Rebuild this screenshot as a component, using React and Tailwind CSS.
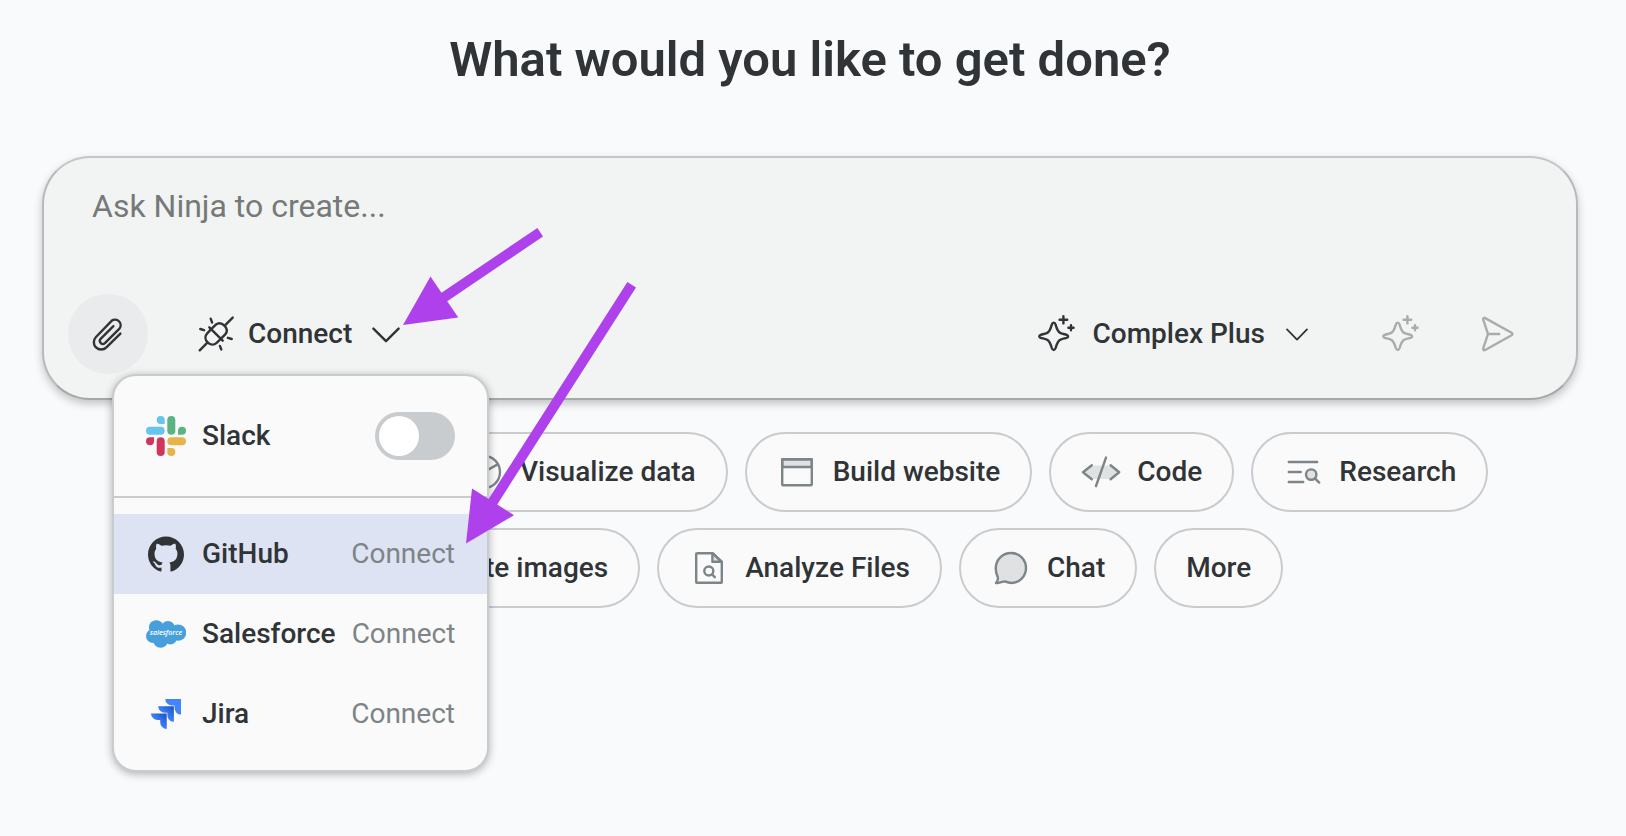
import { useState } from "react";
import { SiGithub } from "react-icons/si";

function Icon({ children, className = "" }) {
  return (
    <svg
      viewBox="0 0 40 40"
      className={`size-10 shrink-0 ${className}`}
      fill="none"
      stroke="currentColor"
      strokeWidth="2.4"
      strokeLinecap="round"
      strokeLinejoin="round"
      aria-hidden="true"
    >
      {children}
    </svg>
  );
}

const PaperclipIcon = () => (
  <Icon>
    <path d="M32.4 19.6L18.4 33.4A7.3 7.3 0 0 1 8 23L23.6 6.8A5.6 5.6 0 0 1 31.5 14.6L16.9 29.2A3.05 3.05 0 0 1 12.6 24.9L25.4 12.2" />
  </Icon>
);

const PlugIcon = () => (
  <Icon>
    <path d="M3.7 36.3L11.4 28.6M29 11.4L36.7 3.6M13.3 13.3L26.7 26.7" />
    <path d="M15.2 15.2L19.6 10.8C22.3 8.6 25.6 8.7 28.4 11.6C31.3 14.5 31.4 17.8 29.2 20.4L24.8 24.8" />
    <path d="M15.2 15.2L11.2 19.4C8.8 22 8.8 25.6 11.6 28.4C14.4 31.2 18 31.2 20.6 28.8L24.8 24.8" />
    <path d="M14.7 4.7L16.1 8.5M4.3 15L8.1 16.2M31.9 23.8L35.7 25M23.9 31.9L25.3 35.5" />
  </Icon>
);

const SparkleIcon = () => (
  <Icon>
    <path d="M16.7 8.6C15.5 8.6 15.1 9.6 14.8 10.6C13.6 15 12.6 18 9.8 19.1C7.8 19.9 5.6 20.3 3.7 20.9C1.8 21.5 1.8 23.3 3.7 23.8C5.6 24.4 7.8 24.8 9.8 25.6C12.6 26.7 13.6 29.6 14.8 34C15.1 35 15.5 36 16.7 36C17.9 36 18.3 35 18.6 34C19.8 29.6 20.8 26.7 23.6 25.6C25.6 24.8 27.8 24.4 29.7 23.8C31.6 23.3 31.6 21.5 29.7 20.9C27.8 20.3 25.6 19.9 23.6 19.1C20.8 18 19.8 15 18.6 10.6C18.3 9.6 17.9 8.6 16.7 8.6Z" />
    <path d="M26.4 2.2V9.4M22.6 5.8H30.2M34 11.2V16.2M31.4 13.7H36.6" />
  </Icon>
);

const SendIcon = () => (
  <Icon>
    <path d="M6.2 5.6C5.8 4.3 7 3.4 8.2 4.1L34.6 18.7C35.7 19.4 35.7 20.6 34.6 21.3L8.2 36C7 36.7 5.8 35.8 6.2 34.4L10.7 20.9C10.9 20.3 10.9 19.7 10.7 19.1ZM11 20H22.2" />
  </Icon>
);

const ChevronIcon = ({ size = "large" }) => (
  <svg
    viewBox="0 0 32 32"
    className="size-8 shrink-0"
    fill="none"
    stroke="currentColor"
    strokeWidth={size === "large" ? 2.4 : 1.8}
    strokeLinecap="round"
    strokeLinejoin="round"
    aria-hidden="true"
  >
    <path d={size === "large" ? "M3.4 10.6L16 23.2L28.6 10.6" : "M6 11.4L16 21.6L26 11.4"} />
  </svg>
);

const PieIcon = () => (
  <Icon>
    <circle cx="20" cy="20" r="16" />
    <path d="M20 4V20L33.2 12.6" />
  </Icon>
);

const WindowIcon = () => (
  <Icon>
    <path d="M5.2 7.2H34.8V15H5.2Z" fill="#dfe1e3" />
    <rect x="5.2" y="7.2" width="29.6" height="26" rx="0.6" />
  </Icon>
);

const CodeIcon = () => (
  <Icon>
    <path d="M11.2 13.4H29L38 20.2L29 27H11.2L2 20.2Z" fill="#dfe1e3" stroke="none" />
    <path d="M10.8 13.2L2 20.3L10.8 27.2M29.6 13.2L38.2 20.3L29.6 27.2M25 5.6L15 34" />
  </Icon>
);

const ResearchIcon = () => (
  <Icon>
    <path d="M5.8 10H34.2M5.8 20H17.8M5.8 30H20.2" />
    <circle cx="28.2" cy="22.6" r="5.2" fill="#dfe1e3" />
    <path d="M32 26.4L36.2 30.6" />
  </Icon>
);

const ImageIcon = () => (
  <Icon>
    <rect x="5" y="6" width="30" height="28" rx="1" />
    <path d="M5 29L15 19L24 28L29 23L35 29" />
  </Icon>
);

const FileSearchIcon = () => (
  <Icon>
    <path d="M23.4 5.2V13.8H32.8Z" fill="#dfe1e3" />
    <path d="M8.6 5.2H23.6L32.8 13.8V33.4C32.8 34.2 32.4 34.8 31.6 34.8H8.6C7.8 34.8 7.2 34.2 7.2 33.4V6.4C7.2 5.6 7.8 5.2 8.6 5.2Z" />
    <circle cx="19.8" cy="23" r="4.5" />
    <path d="M23 26.4L25.8 29.2" />
  </Icon>
);

const ChatIcon = () => (
  <Icon>
    <path
      d="M5 35C7.2 32.6 7.4 30.6 6.4 28C5.2 25.4 4.6 22.6 4.8 19.4C5.2 11 12 5 20 5C28.4 5 35 11.4 35 20C35 28.4 28.4 35 20.4 35C17.6 35 15.8 34.2 14 33.4C11.4 33.2 8.6 35.4 5 35Z"
      fill="#dfe1e3"
    />
  </Icon>
);

const SlackLogo = () => (
  <svg viewBox="0 0 40 40" className="size-10" aria-hidden="true">
    <g fill="#67c3ef">
      <path d="M14.7 0A4 4 0 0 1 18.7 4V8H14.7A4 4 0 0 1 14.7 0Z" />
      <rect y="10.7" width="18.7" height="8" rx="4" />
    </g>
    <g fill="#5ab481">
      <rect x="21.3" width="8" height="18.7" rx="4" />
      <path d="M32 18.7V14.7A4 4 0 1 1 36 18.7Z" />
    </g>
    <g fill="#d0355c">
      <path d="M8 21.3V25.3A4 4 0 1 1 4 21.3Z" />
      <rect x="10.7" y="21.3" width="8" height="18.7" rx="4" />
    </g>
    <g fill="#e5b44b">
      <rect x="21.3" y="21.3" width="18.7" height="8" rx="4" />
      <path d="M21.3 32H25.3A4 4 0 1 1 21.3 36Z" />
    </g>
  </svg>
);

const GithubLogo = () => <SiGithub className="size-9" aria-hidden="true" />;

const SalesforceLogo = () => (
  <svg viewBox="0 0 40 28" className="w-10" aria-hidden="true">
    <g fill="#479fdc">
      <circle cx="10.3" cy="7.6" r="7.4" />
      <circle cx="22" cy="8" r="7" />
      <circle cx="32" cy="12.6" r="8.2" />
      <circle cx="7" cy="16" r="7" />
      <circle cx="14.6" cy="20.2" r="7.6" />
      <circle cx="24.4" cy="18.4" r="6.2" />
    </g>
    <text
      x="20"
      y="14.8"
      textAnchor="middle"
      fill="#fff"
      fontSize="7"
      fontStyle="italic"
      fontWeight="600"
      fontFamily="Open Sans, sans-serif"
    >
      salesforce
    </text>
  </svg>
);

const JiraLogo = () => (
  <svg viewBox="0 0 24 24" className="size-[30px]" aria-hidden="true">
    <defs>
      <linearGradient id="jira-mid" x1="1" y1="0" x2="0.4" y2="0.6">
        <stop offset="0.1" stopColor="#1f55c4" />
        <stop offset="1" stopColor="#4285fb" />
      </linearGradient>
    </defs>
    <path
      fill="#4285fb"
      d="M24 0H11.455a5.215 5.215 0 0 0 5.215 5.215h2.129v2.057A5.215 5.215 0 0 0 24 12.483Z"
    />
    <path
      fill="url(#jira-mid)"
      d="M18.295 5.757H5.736a5.215 5.215 0 0 0 5.215 5.214h2.129v2.058a5.218 5.218 0 0 0 5.215 5.214Z"
    />
    <path
      fill="url(#jira-mid)"
      d="M12.575 11.513H0a5.218 5.218 0 0 0 5.232 5.215h2.13v2.057A5.215 5.215 0 0 0 12.575 24Z"
    />
  </svg>
);

const apps = [
  { name: "GitHub", Logo: GithubLogo },
  { name: "Salesforce", Logo: SalesforceLogo },
  { name: "Jira", Logo: JiraLogo },
];

const firstRow = [
  { label: "Visualize data", ChipIcon: PieIcon },
  { label: "Build website", ChipIcon: WindowIcon },
  { label: "Code", ChipIcon: CodeIcon },
  { label: "Research", ChipIcon: ResearchIcon },
];

const secondRow = [
  { label: "Create images", ChipIcon: ImageIcon },
  { label: "Analyze Files", ChipIcon: FileSearchIcon },
  { label: "Chat", ChipIcon: ChatIcon },
  { label: "More" },
];

function Chip({ label, ChipIcon }) {
  return (
    <button
      type="button"
      className="flex h-20 shrink-0 items-center gap-4 rounded-full border-2 border-[#c8cccf] bg-[#fafafa] px-[30px] font-medium whitespace-nowrap"
    >
      {ChipIcon && (
        <span className="text-[#7c8588]">
          <ChipIcon />
        </span>
      )}
      {label}
    </button>
  );
}

function ConnectMenu() {
  const [slackOn, setSlackOn] = useState(false);
  const [active, setActive] = useState("GitHub");

  return (
    <div className="absolute top-[216px] left-[68px] z-10 w-[377px] rounded-3xl border-2 border-[#c8cccf] bg-[#fafafa] shadow-[0_2px_8px_rgba(0,0,0,0.3)]">
      <div className="flex h-[122px] items-center gap-4 border-b-2 border-[#c8cccf] px-8">
        <SlackLogo />
        <label htmlFor="slack-toggle" className="flex-1 font-medium">
          Slack
        </label>
        <input
          id="slack-toggle"
          type="checkbox"
          role="switch"
          checked={slackOn}
          onChange={(e) => setSlackOn(e.target.checked)}
          className="flex h-12 w-20 appearance-none rounded-full bg-[#c8cccf] p-1 before:size-10 before:rounded-full before:bg-white checked:justify-end checked:bg-[#4285fb]"
        />
      </div>
      <ul className="py-4">
        {apps.map(({ name, Logo }) => (
          <li key={name}>
            <button
              type="button"
              onMouseEnter={() => setActive(name)}
              className={`flex h-20 w-full items-center gap-4 px-8 text-left ${
                active === name ? "bg-[#dee3f4]" : ""
              }`}
            >
              <span className="flex w-10 justify-center">
                <Logo />
              </span>
              <span className="flex-1 font-medium">{name}</span>
              <span className="text-[#7c8588]">Connect</span>
            </button>
          </li>
        ))}
      </ul>
    </div>
  );
}

function Prompt() {
  const [menuOpen, setMenuOpen] = useState(true);

  return (
    <form
      className="relative mt-[68px] rounded-[48px] border-2 border-x-[#b6babc] border-t-[#c3c7ca] border-b-[#a4a8a9] bg-[#f1f4f3] pt-7 pb-6 shadow-[0_4px_8px_rgba(0,0,0,0.22)]"
      onSubmit={(e) => e.preventDefault()}
    >
      <textarea
        aria-label="Prompt"
        placeholder="Ask Ninja to create..."
        className="block h-[108px] w-full resize-none bg-transparent px-12 text-[32px] leading-10 outline-none placeholder:text-[#777978]"
      />
      <div className="flex items-center pr-[39px] pl-6">
        <button
          type="button"
          aria-label="Attach file"
          className="flex size-20 items-center justify-center rounded-full bg-[#e9ebec]"
        >
          <PaperclipIcon />
        </button>
        <button
          type="button"
          aria-expanded={menuOpen}
          onClick={() => setMenuOpen(!menuOpen)}
          className="ml-12 flex h-20 items-center font-medium"
        >
          <PlugIcon />
          <span className="mr-[18px] ml-3">Connect</span>
          <ChevronIcon />
        </button>
        <button type="button" className="ml-auto flex h-20 items-center font-medium">
          <SparkleIcon />
          <span className="mr-4 ml-4">Complex Plus</span>
          <ChevronIcon size="small" />
        </button>
        <button
          type="button"
          aria-label="Enhance prompt"
          className="ml-12 flex size-20 items-center justify-center text-[#a9acab]"
        >
          <SparkleIcon />
        </button>
        <button
          type="submit"
          aria-label="Send"
          className="ml-4 flex size-20 items-center justify-center text-[#a9acab]"
        >
          <SendIcon />
        </button>
      </div>
      {menuOpen && <ConnectMenu />}
    </form>
  );
}

function Arrows() {
  return (
    <svg
      width="700"
      height="600"
      fill="#ae41eb"
      className="pointer-events-none absolute top-0 left-0 z-20"
      aria-hidden="true"
    >
      <path d="M403 325L430.5 276.5L441.5 292.8L537.4 228L543 236.5L447.2 301.3L458.3 317.6Z" />
      <path d="M466 543.6L472 488.5L488.6 499L627.4 282L636 287.4L497.2 504.4L514 515.2Z" />
    </svg>
  );
}

export default function App() {
  return (
    <main className="relative min-h-screen overflow-hidden bg-[#f9fafc] pt-8 pr-12 pl-[42px] font-[Roboto,sans-serif] text-[28px] leading-10 text-[#303437]">
      <h1 className="text-center text-[49px] leading-14 font-semibold">
        What would you like to get done?
      </h1>
      <Prompt />
      <div className="mt-8 flex gap-[17px] pl-[390px]">
        {firstRow.map((chip) => (
          <Chip key={chip.label} {...chip} />
        ))}
      </div>
      <div className="mt-4 flex gap-[17px] pl-[297px]">
        {secondRow.map((chip) => (
          <Chip key={chip.label} {...chip} />
        ))}
      </div>
      <Arrows />
    </main>
  );
}
